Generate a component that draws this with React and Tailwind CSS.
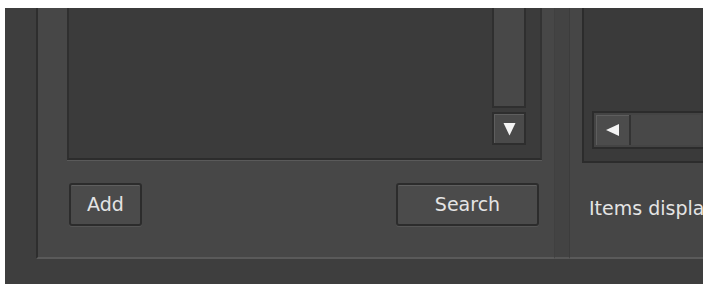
export default function App() {
  const font = { fontFamily: '"DejaVu Sans", "Noto Sans", sans-serif' };

  return (
    <div className="w-[707px] h-[284px] bg-white pt-[8px] pl-[5px] pr-[4px] overflow-hidden" style={font}>
      {/* Window */}
      <div className="flex h-[276px] bg-[#3e3e3e] pl-[31px]">
        {/* Left group box */}
        <div className="flex flex-col w-[519px] h-[251px] bg-[#474747] border-l-2 border-l-[#2e2e2e] border-b-2 border-b-[#5a5a5a] border-r border-r-[#404040]">
          {/* List box */}
          <div className="ml-[29px] w-[475px] h-[152px] flex bg-[#3b3b3b] border-l-2 border-l-[#2f2f2f] border-r-2 border-r-[#333333] border-b-2 border-b-[#2c2c2c] shadow-[0_1px_0_#5a5a5a]">
            <div className="flex-1" />
            {/* Vertical scrollbar */}
            <div className="flex flex-col w-[34px] mr-[14px] mb-[13px]">
              <div className="flex-1 bg-[#484848] border-x-2 border-b-2 border-[#2f2f2f]" />
              <div className="mt-[4px] h-[33px] flex items-center justify-center bg-[#4a4a4a] border-2 border-[#2e2e2e] shadow-[inset_1px_1px_0_#5e5e5e]">
                <svg width="13" height="14" viewBox="0 0 13 14">
                  <path d="M0.5 1 L12.5 1 L6.5 13.5 Z" fill="#f4f4f4" />
                </svg>
              </div>
            </div>
          </div>

          {/* Buttons */}
          <div className="flex justify-between mt-[23px] ml-[31px] mr-[15px]">
            <button className="w-[73px] h-[43px] flex items-center justify-center text-[19px] text-[#e4e4e4] bg-[#4b4b4b] border-2 border-[#2c2c2c] rounded-[3px] shadow-[inset_0_1px_0_#5f5f5f,0_1px_0_#555555]">
              Add
            </button>
            <button className="w-[143px] h-[43px] flex items-center justify-center text-[19px] text-[#e4e4e4] bg-[#4b4b4b] border-2 border-[#2c2c2c] rounded-[3px] shadow-[inset_0_1px_0_#5f5f5f,0_1px_0_#555555]">
              Search
            </button>
          </div>
        </div>

        {/* Gap between the group boxes */}
        <div className="w-[14px] h-[251px] bg-[#434343] border-b-2 border-b-[#575757]" />

        {/* Right group box */}
        <div className="flex-1 flex flex-col h-[251px] bg-[#464646] border-l border-l-[#3c3c3c] border-b-2 border-b-[#5a5a5a] overflow-hidden">
          {/* List view */}
          <div className="ml-[12px] h-[155px] flex flex-col justify-end bg-[#3a3a3a] border-l-2 border-l-[#2c2c2c] border-b-2 border-b-[#2c2c2c]">
            {/* Horizontal scrollbar */}
            <div className="ml-[8px] mb-[12px] h-[38px] flex bg-[#444444] border-2 border-r-0 border-[#2c2c2c] p-[2px]">
              <div className="w-[35px] flex items-center justify-center bg-[#4c4c4c] border-r-2 border-r-[#333333] shadow-[inset_1px_1px_0_#5e5e5e]">
                <svg width="15" height="14" viewBox="0 0 15 14">
                  <path d="M14 1 L14 13 L1 7 Z" fill="#f4f4f4" />
                </svg>
              </div>
              <div className="flex-1 bg-[#484848]" />
            </div>
          </div>
          <div className="mt-[31px] ml-[19px] text-[19px] text-[#e4e4e4] whitespace-nowrap">
            Items displayed
          </div>
        </div>
      </div>
    </div>
  );
}
